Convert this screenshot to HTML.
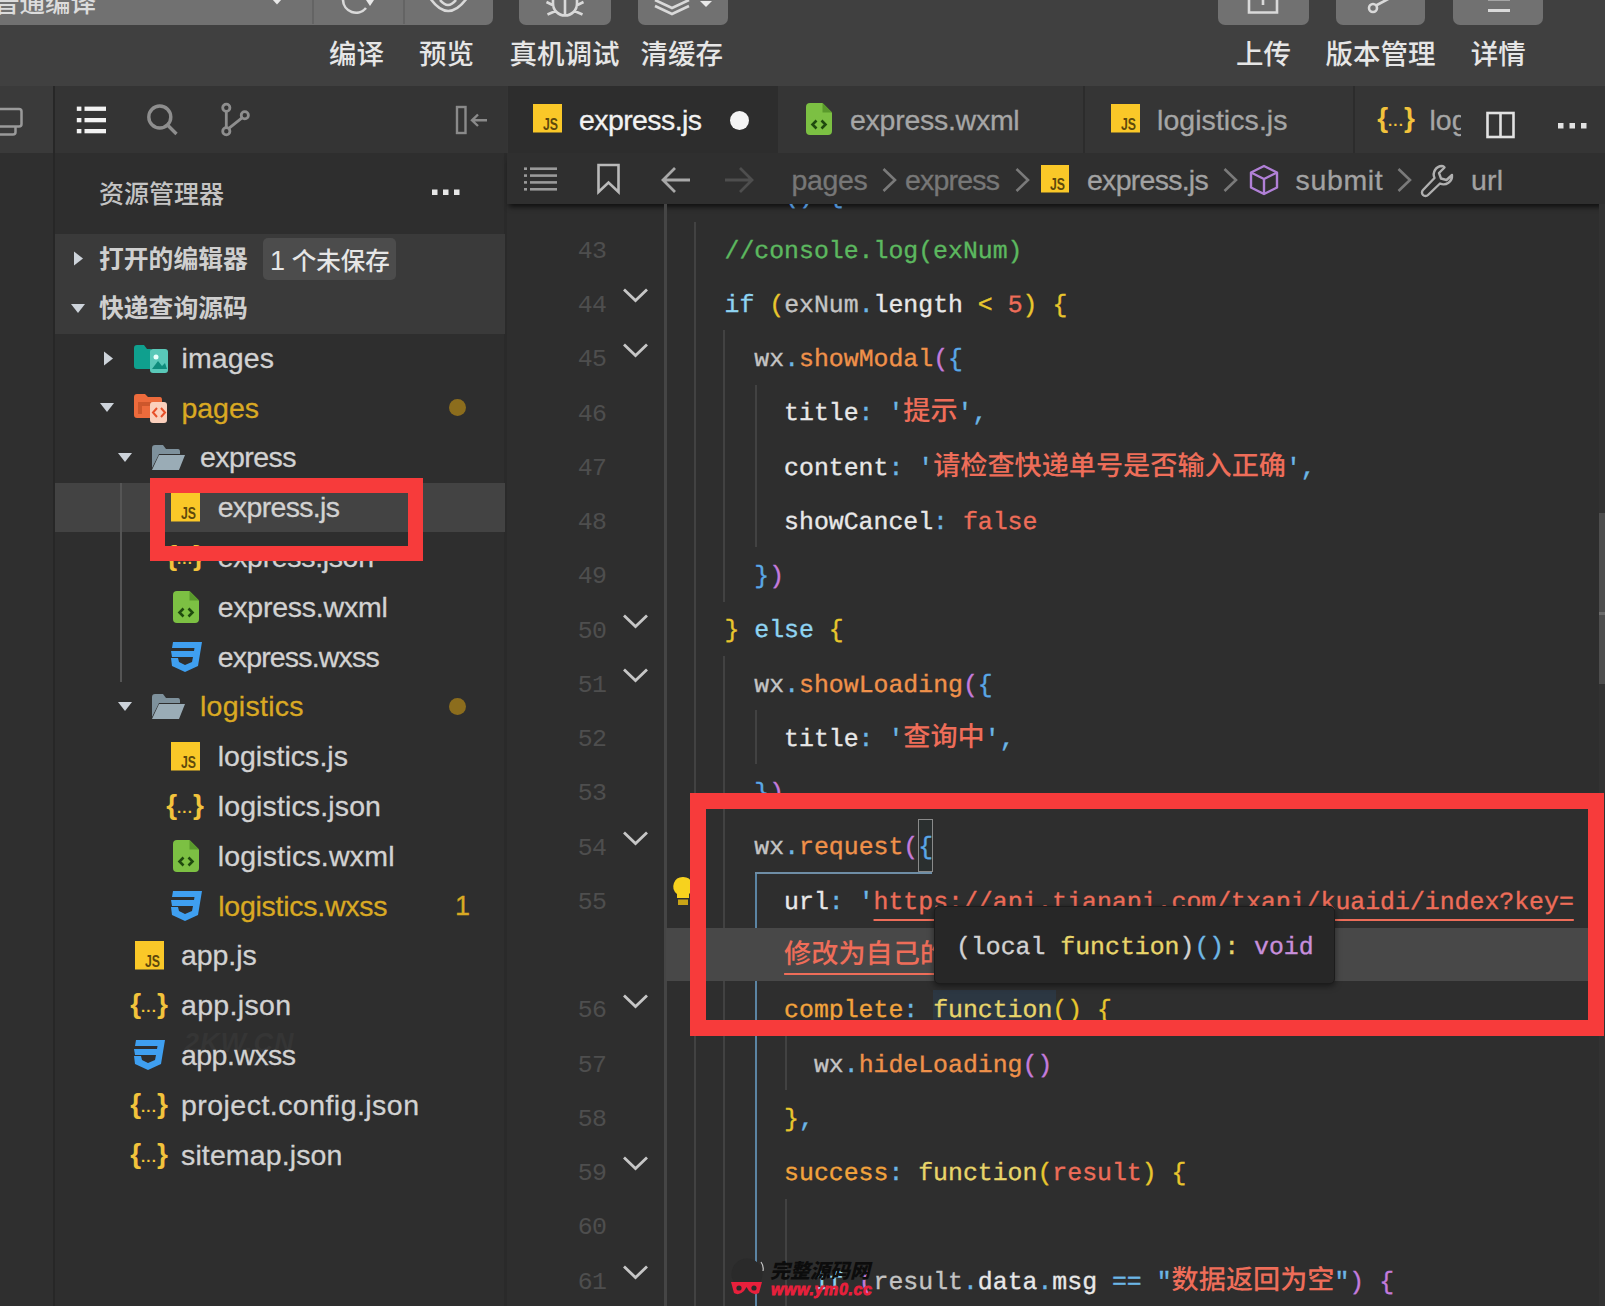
<!DOCTYPE html>
<html lang="zh-CN">
<head>
<meta charset="utf-8">
<title>express.js</title>
<style>
html,body{margin:0;padding:0}
body{width:1605px;height:1306px;overflow:hidden;position:relative;background:#2e2e2e;
  font-family:"Liberation Sans","Noto Sans CJK SC",sans-serif;color:#ccc}
.a{position:absolute}
svg{position:absolute;overflow:visible}
#tb{left:0;top:0;width:1605px;height:85.5px;background:#404040}
.btn{top:-10px;height:34.5px;background:#717171;border-radius:7px}
.lbl{top:34.5px;height:40px;line-height:40px;font-size:27.5px;color:#e6e6e6;white-space:nowrap;text-align:center;
  font-family:"Liberation Sans","Noto Sans CJK SC",sans-serif;font-weight:500}
#act{left:0;top:86px;width:52.5px;height:1220px;background:#2f2f2f;border-right:2.5px solid #272727}
#side{left:55px;top:86px;width:449px;height:1220px;background:#2e2e2e;border-right:3.5px solid #2a2a2a}
#sidehead{left:55px;top:86px;width:452px;height:67px;background:#343434}
#sec{left:55px;top:233.5px;width:450px;height:100.5px;background:#3a3a3a}
#selrow{left:55px;top:482.5px;width:450px;height:49.8px;background:#434343}
.t{height:49.8px;line-height:49.8px;font-size:28.5px;color:#d2d2d2;white-space:nowrap;-webkit-text-stroke:0.3px}
.t.y{color:#d9a923}
.c{font-family:"Liberation Sans","Noto Sans CJK SC",sans-serif;font-size:24.8px;font-weight:500;color:#cfcfcf;height:49.8px;line-height:49.8px;white-space:nowrap}
#tabs{left:507px;top:86px;width:1098px;height:67px;background:#353535}
#tab1{left:507.5px;top:86px;width:270px;height:67px;background:#2d2d2d}
.tt{top:86px;height:67px;line-height:68px;font-size:28.5px;white-space:nowrap;color:#a6a6a6;-webkit-text-stroke:0.3px}
#bc{left:507px;top:153px;width:1098px;height:50.5px;background:#2f2f2f;box-shadow:0 5px 5px -2px rgba(0,0,0,.65)}
.bt{top:155px;height:50px;line-height:50px;font-size:28.5px;white-space:nowrap;color:#777;-webkit-text-stroke:0.3px}
.ln{left:560px;width:46.5px;height:54.26px;line-height:54.26px;color:#4e4e4e;font-family:"Liberation Mono",monospace;font-size:24.83px;letter-spacing:-0.5px;text-align:right;white-space:nowrap}
.cl{left:724.5px;height:54.26px;line-height:54.26px;white-space:pre;font-family:"Liberation Mono","Noto Sans CJK SC",monospace;font-size:24.83px;color:#d4d4d4;text-rendering:geometricPrecision;-webkit-text-stroke:0.35px}
.z{font-size:27.15px;font-family:"Liberation Sans","Noto Sans CJK SC",sans-serif;line-height:0;font-weight:500;-webkit-text-stroke:0}
.g{width:2px;background:#404040}
.cm{color:#5cb85f}.kw{color:#8fd4f2}.py{color:#e8c62d}.pp{color:#c47bdc}.pb{color:#5aa7e6}
.fn{color:#f0914a}.st{color:#ee6d59}.q{color:#6cb6e6}.pr{color:#e8e8e8}.or{color:#f2a33c}.fy{color:#e8d56a}.gr{color:#c4c4c4}
.u{text-decoration:underline;text-decoration-thickness:2px;text-underline-offset:10px}
.red{border:16px solid #f73b3b;box-sizing:border-box}
</style>
</head>
<body>
<div id="tb" class="a"></div>
<div class="a btn" style="left:-10px;width:502.5px"></div>
<div class="a" style="left:312px;top:0;width:2px;height:24px;background:#646464"></div>
<div class="a" style="left:403px;top:0;width:2px;height:24px;background:#646464"></div>
<div class="a btn" style="left:519px;width:92px"></div>
<div class="a btn" style="left:638px;width:89.5px"></div>
<div class="a btn" style="left:1218px;width:91px"></div>
<div class="a btn" style="left:1336px;width:89px"></div>
<div class="a btn" style="left:1453px;width:90px"></div>
<div class="a lbl" style="left:-6px;top:-17px;font-size:25.5px;color:#dcdcdc">普通编译</div>
<svg style="left:0;top:2px" width="1605" height="30" viewBox="0 0 1605 30" fill="none" stroke="#d9d9d9" stroke-width="2.6">
 <path d="M272 -3 L277 2.5 L282 -3 Z" fill="#e8e8e8" stroke="none"/>
 <path d="M343 -2 A13 13 0 0 0 366 6"/>
 <path d="M366 -2 L374 -2 L370 4 Z" fill="#e8e8e8" stroke="none"/>
 <path d="M430 -4 Q448 22 467 -4" />
 <path d="M440 -2 Q448 8 456 -2" />
 <path d="M553 -2 L553 1.5 A12 12 0 0 0 577 1.5 L577 -2 M565 -2 L565 13.5 M553.5 3.5 L546.5 0 M576.5 3.5 L583.5 0 M555.5 9 L547.5 12.5 M574.5 9 L582.5 12.5"/>
 <path d="M655 -2 L672 6 L689 -2 M655 4 L672 12 L689 4"/>
 <path d="M700 -1 L706 5 L712 -1 Z" fill="#e8e8e8" stroke="none"/>
 <path d="M1249 -2 L1249 10.5 L1277 10.5 L1277 -2 M1263 -2 L1263 3"/>
 <circle cx="1373" cy="6" r="4"/><path d="M1376 3.5 L1392 -5"/>
 <path d="M1488 -3 L1510 -3 M1488 8.5 L1510 8.5" stroke-width="3"/>
</svg>
<div class="a lbl" style="left:326.5px;width:60px">编译</div>
<div class="a lbl" style="left:416.5px;width:60px">预览</div>
<div class="a lbl" style="left:504.6px;width:120px">真机调试</div>
<div class="a lbl" style="left:631.8px;width:100px">清缓存</div>
<div class="a lbl" style="left:1233.5px;width:60px">上传</div>
<div class="a lbl" style="left:1320.4px;width:120px">版本管理</div>
<div class="a lbl" style="left:1468.3px;width:60px">详情</div>
<div id="act" class="a"></div><div id="side" class="a"></div><div id="sidehead" class="a"></div><div id="sec" class="a"></div><div id="selrow" class="a"></div>
<div class="a" style="left:0;top:86px;width:53px;height:67px;background:#3a3a3a"></div>
<svg style="left:0px;top:100px" width="30" height="40" viewBox="0 0 30 40" ><path d="M-6 9 H19 Q21.5 9 21.5 11.5 V24 Q21.5 26.5 19 26.5 H-6 M15.5 27 V32 Q15.5 34.5 13 34.5 H-6" fill="none" stroke="#9a9a9a" stroke-width="2.5"/></svg>
<svg style="left:70px;top:100px" width="40" height="40" viewBox="0 0 40 40" ><g fill="#f2f2f2"><rect x="6.8" y="6.6" width="4.6" height="4.3"/><rect x="14.5" y="6.6" width="21.5" height="4.3"/><rect x="6.8" y="18" width="4.6" height="4.3"/><rect x="14.5" y="18" width="21.5" height="4.3"/><rect x="6.8" y="29" width="4.6" height="4.3"/><rect x="14.5" y="29" width="21.5" height="4.3"/></g></svg>
<svg style="left:140px;top:100px" width="40" height="40" viewBox="0 0 40 40" ><circle cx="19.8" cy="17" r="11" fill="none" stroke="#8e8e8e" stroke-width="3.4"/><path d="M28 25.5 L36.5 34" stroke="#8e8e8e" stroke-width="3.4"/></svg>
<svg style="left:215px;top:100px" width="40" height="40" viewBox="0 0 40 40" ><g fill="none" stroke="#8e8e8e" stroke-width="2.8"><circle cx="11.3" cy="7.7" r="3.6"/><circle cx="29.8" cy="15.2" r="3.6"/><circle cx="11.3" cy="31.2" r="3.6"/><path d="M11.3 11.3 V27.6 M27 17.8 L13.5 28.6"/></g></svg>
<svg style="left:450px;top:100px" width="40" height="40" viewBox="0 0 40 40" ><g fill="none" stroke="#8a8a8a" stroke-width="2.4"><rect x="7" y="7" width="8.5" height="26"/><path d="M22 20.3 H37 M28 14.5 L22 20.3 L28 26"/></g></svg>
<div class="a c" style="left:99px;top:170px;color:#c4c4c4;font-size:25px">资源管理器</div>
<svg style="left:428px;top:182px" width="36" height="20" viewBox="0 0 36 20" ><g fill="#e6e6e6"><rect x="4" y="7.5" width="5.5" height="5.5"/><rect x="15" y="7.5" width="5.5" height="5.5"/><rect x="26" y="7.5" width="5.5" height="5.5"/></g></svg>
<svg style="left:73.0px;top:250.89999999999998px" width="11" height="15" viewBox="0 0 11 15" ><path d="M1 0.5 L10 7.5 L1 14.5 Z" fill="#cdd3da"/></svg>
<div class="a c" style="left:99px;top:234.49999999999997px;font-weight:700">打开的编辑器</div>
<div class="a" style="left:263px;top:238px;width:133px;height:42px;background:#4c4c4c;border-radius:5px"></div>
<div class="a c" style="left:270px;top:236.49999999999997px;color:#e6e6e6;font-size:24.5px"><span style="font-family:Liberation Sans,sans-serif;font-size:27px">1</span> 个未保存</div>
<svg style="left:70.7px;top:304.3px" width="14" height="9" viewBox="0 0 14 9" ><path d="M0 0 H14 L7 9 Z" fill="#cdd3da"/></svg>
<div class="a c" style="left:99px;top:284.3px;font-weight:700">快递查询源码</div>
<div class="a" style="left:184px;top:1028px;font:italic bold 27px 'Liberation Sans',sans-serif;color:#353535;letter-spacing:1px">2KW.CN</div>
<svg style="left:102.5px;top:350.5px" width="11" height="15" viewBox="0 0 11 15" ><path d="M1 0.5 L10 7.5 L1 14.5 Z" fill="#cdd3da"/></svg>
<svg style="left:134px;top:344.5px" width="34" height="30" viewBox="0 0 34 30" ><path d="M0 3 Q0 0 3 0 H10 L13 4 H17 V24 H3 Q0 24 0 21 Z" fill="#0fa08e"/><rect x="16" y="4" width="18" height="24" rx="3" fill="#59c8b8"/><circle cx="22" cy="12" r="2.5" fill="#e9fffb"/><path d="M18 24 L24 16 L28 21 L31 18 L33 24 Z" fill="#0f8c7c"/></svg>
<div class="a t" id="t2" style="left:181.5px;top:333.8px;letter-spacing:0.125px">images</div>
<svg style="left:100px;top:403.29999999999995px" width="14" height="9" viewBox="0 0 14 9" ><path d="M0 0 H14 L7 9 Z" fill="#cdd3da"/></svg>
<svg style="left:134px;top:393.79999999999995px" width="34" height="30" viewBox="0 0 34 30" ><path d="M0 3 Q0 0 3 0 H11 L14 3 H26 Q28 3 28 6 V24 H3 Q0 24 0 21 Z" fill="#ed6b3c"/><path d="M4 8 H17 V12 H8 V20 H4 Z" fill="#b84a22" opacity=".6"/><rect x="16" y="8" width="17" height="21" rx="3" fill="#fbd0bd"/><path d="M23 14 L19 18.5 L23 23 M27 14 L31 18.5 L27 23" stroke="#e8502a" stroke-width="2" fill="none"/></svg>
<div class="a t y" id="t3" style="left:181.5px;top:383.6px;letter-spacing:-0.039px">pages</div>
<svg style="left:118.3px;top:453.09999999999997px" width="14" height="9" viewBox="0 0 14 9" ><path d="M0 0 H14 L7 9 Z" fill="#cdd3da"/></svg>
<svg style="left:152.4px;top:444.59999999999997px" width="33" height="25" viewBox="0 0 33 25" ><path d="M0 3 Q0 0 3 0 H11 L14 4 H26 Q28 4 28 7 V9 H7 L0 23 Z" fill="#7e919c"/><path d="M7 10 H33 L27 25 H0 Z" fill="#9aacb6"/></svg>
<div class="a t" id="t4" style="left:200px;top:433.4px;letter-spacing:-0.549px">express</div>
<svg style="left:171px;top:492.9px" width="29" height="29" viewBox="0 0 29 29" ><rect width="29" height="28.5" fill="#fac828"/><text x="10" y="25.5" textLength="15" lengthAdjust="spacingAndGlyphs" font-family="Liberation Sans, sans-serif" font-weight="700" font-size="16" fill="#5e480c">JS</text></svg>
<div class="a t" id="t5" style="left:217.7px;top:483.2px;letter-spacing:-0.666px">express.js</div>
<svg style="left:166px;top:539.1999999999999px" width="38" height="34" viewBox="0 0 38 34" ><text x="19" y="26" text-anchor="middle" font-family="Liberation Sans, sans-serif" font-weight="bold" font-size="28" fill="#f2c33c" letter-spacing="0">{<tspan font-size="15" dy="2.5" letter-spacing="0.3">···</tspan><tspan dy="-2.5">}</tspan></text></svg>
<div class="a t" id="t6" style="left:217.7px;top:533.0px;letter-spacing:-0.336px">express.json</div>
<svg style="left:173px;top:591.0px" width="26" height="32" viewBox="0 0 26 32" ><path d="M4 0 H16.5 L26 9.5 V28 Q26 32 22 32 H4 Q0 32 0 28 V4 Q0 0 4 0 Z" fill="#7cc043"/><path d="M16.5 0 L26 9.5 H16.5 Z" fill="#5a9a2c"/><path d="M10.5 17.5 L6.5 21.5 L10.5 25.5 M15.5 17.5 L19.5 21.5 L15.5 25.5" stroke="#1f4a0e" stroke-width="2.6" fill="none"/></svg>
<div class="a t" id="t7" style="left:217.7px;top:582.8px;letter-spacing:-0.230px">express.wxml</div>
<svg style="left:170px;top:641.8px" width="32" height="30" viewBox="0 0 32 30" ><path d="M3 0 H32 L28 24 L15 30 L2 24 L1 16 H8 L9 20 L15 23 L22 20 L23 15 H2 L1 9 H24 L24.5 6 H2 Z" fill="#3f9ff0"/></svg>
<div class="a t" id="t8" style="left:217.7px;top:632.6px;letter-spacing:-0.822px">express.wxss</div>
<svg style="left:118.3px;top:702.0999999999999px" width="14" height="9" viewBox="0 0 14 9" ><path d="M0 0 H14 L7 9 Z" fill="#cdd3da"/></svg>
<svg style="left:152.4px;top:693.5999999999999px" width="33" height="25" viewBox="0 0 33 25" ><path d="M0 3 Q0 0 3 0 H11 L14 4 H26 Q28 4 28 7 V9 H7 L0 23 Z" fill="#7e919c"/><path d="M7 10 H33 L27 25 H0 Z" fill="#9aacb6"/></svg>
<div class="a t y" id="t9" style="left:200px;top:682.4px;letter-spacing:0.266px">logistics</div>
<svg style="left:171px;top:741.9px" width="29" height="29" viewBox="0 0 29 29" ><rect width="29" height="28.5" fill="#fac828"/><text x="10" y="25.5" textLength="15" lengthAdjust="spacingAndGlyphs" font-family="Liberation Sans, sans-serif" font-weight="700" font-size="16" fill="#5e480c">JS</text></svg>
<div class="a t" id="t10" style="left:217.7px;top:732.2px;letter-spacing:0.039px">logistics.js</div>
<svg style="left:166px;top:788.1999999999999px" width="38" height="34" viewBox="0 0 38 34" ><text x="19" y="26" text-anchor="middle" font-family="Liberation Sans, sans-serif" font-weight="bold" font-size="28" fill="#f2c33c" letter-spacing="0">{<tspan font-size="15" dy="2.5" letter-spacing="0.3">···</tspan><tspan dy="-2.5">}</tspan></text></svg>
<div class="a t" id="t11" style="left:217.7px;top:782.0px;letter-spacing:0.132px">logistics.json</div>
<svg style="left:173px;top:839.9999999999999px" width="26" height="32" viewBox="0 0 26 32" ><path d="M4 0 H16.5 L26 9.5 V28 Q26 32 22 32 H4 Q0 32 0 28 V4 Q0 0 4 0 Z" fill="#7cc043"/><path d="M16.5 0 L26 9.5 H16.5 Z" fill="#5a9a2c"/><path d="M10.5 17.5 L6.5 21.5 L10.5 25.5 M15.5 17.5 L19.5 21.5 L15.5 25.5" stroke="#1f4a0e" stroke-width="2.6" fill="none"/></svg>
<div class="a t" id="t12" style="left:217.7px;top:831.8px;letter-spacing:0.201px">logistics.wxml</div>
<svg style="left:170px;top:890.8px" width="32" height="30" viewBox="0 0 32 30" ><path d="M3 0 H32 L28 24 L15 30 L2 24 L1 16 H8 L9 20 L15 23 L22 20 L23 15 H2 L1 9 H24 L24.5 6 H2 Z" fill="#3f9ff0"/></svg>
<div class="a t y" id="t13" style="left:218.3px;top:881.6px;letter-spacing:-0.263px">logistics.wxss</div>
<svg style="left:134.5px;top:941.0999999999999px" width="29" height="29" viewBox="0 0 29 29" ><rect width="29" height="28.5" fill="#fac828"/><text x="10" y="25.5" textLength="15" lengthAdjust="spacingAndGlyphs" font-family="Liberation Sans, sans-serif" font-weight="700" font-size="16" fill="#5e480c">JS</text></svg>
<div class="a t" id="t14" style="left:181px;top:931.4px;letter-spacing:-0.073px">app.js</div>
<svg style="left:129.5px;top:987.4px" width="38" height="34" viewBox="0 0 38 34" ><text x="19" y="26" text-anchor="middle" font-family="Liberation Sans, sans-serif" font-weight="bold" font-size="28" fill="#f2c33c" letter-spacing="0">{<tspan font-size="15" dy="2.5" letter-spacing="0.3">···</tspan><tspan dy="-2.5">}</tspan></text></svg>
<div class="a t" id="t15" style="left:181px;top:981.2px;letter-spacing:0.319px">app.json</div>
<svg style="left:133px;top:1040.1999999999998px" width="32" height="30" viewBox="0 0 32 30" ><path d="M3 0 H32 L28 24 L15 30 L2 24 L1 16 H8 L9 20 L15 23 L22 20 L23 15 H2 L1 9 H24 L24.5 6 H2 Z" fill="#3f9ff0"/></svg>
<div class="a t" id="t16" style="left:181px;top:1031.0px;letter-spacing:-0.545px">app.wxss</div>
<svg style="left:129.5px;top:1087.0px" width="38" height="34" viewBox="0 0 38 34" ><text x="19" y="26" text-anchor="middle" font-family="Liberation Sans, sans-serif" font-weight="bold" font-size="28" fill="#f2c33c" letter-spacing="0">{<tspan font-size="15" dy="2.5" letter-spacing="0.3">···</tspan><tspan dy="-2.5">}</tspan></text></svg>
<div class="a t" id="t17" style="left:181px;top:1080.8px;letter-spacing:0.460px">project.config.json</div>
<svg style="left:129.5px;top:1136.8px" width="38" height="34" viewBox="0 0 38 34" ><text x="19" y="26" text-anchor="middle" font-family="Liberation Sans, sans-serif" font-weight="bold" font-size="28" fill="#f2c33c" letter-spacing="0">{<tspan font-size="15" dy="2.5" letter-spacing="0.3">···</tspan><tspan dy="-2.5">}</tspan></text></svg>
<div class="a t" id="t18" style="left:181px;top:1130.6px;letter-spacing:0.127px">sitemap.json</div>
<div class="a" style="left:120px;top:483px;width:2px;height:199px;background:#555"></div>
<div class="a" style="left:449px;top:398.5px;width:17px;height:17px;border-radius:50%;background:#8c6d1d"></div>
<div class="a" style="left:449px;top:697.5px;width:17px;height:17px;border-radius:50%;background:#8c6d1d"></div>
<div class="a t y" style="left:455px;top:881.6px;font-size:27px">1</div>
<div id="tabs" class="a"></div><div id="tab1" class="a"></div>
<div class="a" style="left:1082.5px;top:86px;width:2px;height:67px;background:#2c2c2c"></div>
<div class="a" style="left:1353px;top:86px;width:2px;height:67px;background:#2c2c2c"></div>
<svg style="left:533px;top:103.5px" width="29" height="29" viewBox="0 0 29 29" ><rect width="29" height="28.5" fill="#fac828"/><text x="10" y="25.5" textLength="15" lengthAdjust="spacingAndGlyphs" font-family="Liberation Sans, sans-serif" font-weight="700" font-size="16" fill="#5e480c">JS</text></svg>
<div class="a tt" id="tt1" style="left:579px;color:#f2f2f2;letter-spacing:-0.589px">express.js</div>
<div class="a" style="left:729.5px;top:110.8px;width:19px;height:19px;border-radius:50%;background:#f4f4f4"></div>
<svg style="left:806px;top:103px" width="26" height="32" viewBox="0 0 26 32" ><path d="M4 0 H16.5 L26 9.5 V28 Q26 32 22 32 H4 Q0 32 0 28 V4 Q0 0 4 0 Z" fill="#7cc043"/><path d="M16.5 0 L26 9.5 H16.5 Z" fill="#5a9a2c"/><path d="M10.5 17.5 L6.5 21.5 L10.5 25.5 M15.5 17.5 L19.5 21.5 L15.5 25.5" stroke="#1f4a0e" stroke-width="2.6" fill="none"/></svg>
<div class="a tt" id="tt2" style="left:850px;letter-spacing:-0.266px">express.wxml</div>
<svg style="left:1111px;top:104px" width="29" height="29" viewBox="0 0 29 29" ><rect width="29" height="28.5" fill="#fac828"/><text x="10" y="25.5" textLength="15" lengthAdjust="spacingAndGlyphs" font-family="Liberation Sans, sans-serif" font-weight="700" font-size="16" fill="#5e480c">JS</text></svg>
<div class="a tt" id="tt3" style="left:1157px;letter-spacing:0.057px">logistics.js</div>
<svg style="left:1377px;top:101px" width="38" height="34" viewBox="0 0 38 34" ><text x="19" y="26" text-anchor="middle" font-family="Liberation Sans, sans-serif" font-weight="bold" font-size="28" fill="#f2c33c" letter-spacing="0">{<tspan font-size="15" dy="2.5" letter-spacing="0.3">···</tspan><tspan dy="-2.5">}</tspan></text></svg>
<div class="a tt" id="tt4" style="left:1429.4px;width:31.5px;overflow:hidden;letter-spacing:0.109px">logistics.json</div>
<svg style="left:1480px;top:100px" width="40" height="40" viewBox="0 0 40 40" ><g fill="none" stroke="#e2e2e2" stroke-width="2.6"><rect x="7.5" y="13" width="26" height="24"/><path d="M20.5 13 V37"/></g></svg>
<svg style="left:1553px;top:110px" width="40" height="20" viewBox="0 0 40 20" ><g fill="#e2e2e2"><rect x="5" y="13" width="5.5" height="5.5"/><rect x="16.5" y="13" width="5.5" height="5.5"/><rect x="28" y="13" width="5.5" height="5.5"/></g></svg>
<div id="bc" class="a"></div>
<svg style="left:520px;top:160px" width="40" height="40" viewBox="0 0 40 40" ><g fill="#9a9a9a"><rect x="4" y="7.4" width="3" height="2.6"/><rect x="10" y="7.4" width="27" height="2.6"/><rect x="4" y="14.3" width="3" height="2.6"/><rect x="10" y="14.3" width="27" height="2.6"/><rect x="4" y="21.1" width="3" height="2.6"/><rect x="10" y="21.1" width="27" height="2.6"/><rect x="4" y="28" width="3" height="2.6"/><rect x="10" y="28" width="27" height="2.6"/></g></svg>
<svg style="left:590px;top:160px" width="40" height="40" viewBox="0 0 40 40" ><path d="M8.5 5 H28.5 V32 L18.5 22.5 L8.5 32 Z" fill="none" stroke="#b9b9b9" stroke-width="2.6"/></svg>
<svg style="left:655px;top:160px" width="40" height="40" viewBox="0 0 40 40" ><path d="M8 20 H35 M20 8 L8 20 L20 32" fill="none" stroke="#a8a8a8" stroke-width="2.8"/></svg>
<svg style="left:720px;top:160px" width="40" height="40" viewBox="0 0 40 40" ><path d="M5 20 H32 M20 8 L32 20 L20 32" fill="none" stroke="#4e4e4e" stroke-width="2.8"/></svg>
<div class="a bt" id="b1" style="left:791.4px;letter-spacing:-0.314px">pages</div>
<svg style="left:882px;top:166px" width="16" height="28" viewBox="0 0 16 28" ><path d="M1.5 3 L13 14 L1.5 25" fill="none" stroke="#7a7a7a" stroke-width="2.6"/></svg>
<div class="a bt" id="b2" style="left:905px;letter-spacing:-0.799px">express</div>
<svg style="left:1015px;top:166px" width="16" height="28" viewBox="0 0 16 28" ><path d="M1.5 3 L13 14 L1.5 25" fill="none" stroke="#7a7a7a" stroke-width="2.6"/></svg>
<svg style="left:1041px;top:165px" width="28" height="28" viewBox="0 0 28 28" ><rect width="28" height="27.5" fill="#fac828"/><text x="9" y="24.5" textLength="15" lengthAdjust="spacingAndGlyphs" font-family="Liberation Sans, sans-serif" font-weight="700" font-size="16" fill="#5e480c">JS</text></svg>
<div class="a bt" id="b3" style="left:1087px;letter-spacing:-0.733px;color:#a2a2a2">express.js</div>
<svg style="left:1223px;top:166px" width="16" height="28" viewBox="0 0 16 28" ><path d="M1.5 3 L13 14 L1.5 25" fill="none" stroke="#7a7a7a" stroke-width="2.6"/></svg>
<svg style="left:1247px;top:163px" width="34" height="34" viewBox="0 0 34 34" ><g fill="none" stroke="#b180d7" stroke-width="2.4" stroke-linejoin="round"><path d="M17 3 L30 9.5 V24.5 L17 31 L4 24.5 V9.5 Z"/><path d="M4 9.5 L17 16 L30 9.5 M17 16 V31"/></g></svg>
<div class="a bt" id="b4" style="left:1295.5px;letter-spacing:0.649px;color:#a2a2a2">submit</div>
<svg style="left:1397px;top:166px" width="16" height="28" viewBox="0 0 16 28" ><path d="M1.5 3 L13 14 L1.5 25" fill="none" stroke="#7a7a7a" stroke-width="2.6"/></svg>
<svg style="left:1420px;top:163px" width="36" height="34" viewBox="0 0 36 34" ><path d="M22 3 A8.5 8.5 0 0 0 14.5 15 L3 27 A3.2 3.2 0 0 0 8 32 L20 20.5 A8.5 8.5 0 0 0 32 12 L26.5 17 L21 15.5 L19 10 L24.5 4.5 Q23.5 3 22 3 Z" fill="none" stroke="#b0b0b0" stroke-width="2.4" stroke-linejoin="round"/></svg>
<div class="a bt" id="b5" style="left:1471px;letter-spacing:0.156px;color:#a2a2a2">url</div>
<div class="a" style="left:664px;top:204px;width:2.5px;height:1102px;background:#454545"></div>
<div class="a" style="left:693.7px;top:221.87px;width:2px;height:1084.13px;background:#424242"></div>
<div class="a" style="left:723px;top:330.39px;width:2px;height:271.29999999999995px;background:#424242"></div>
<div class="a" style="left:723px;top:655.9499999999999px;width:2px;height:650.0500000000001px;background:#424242"></div>
<div class="a" style="left:755px;top:384.65px;width:2px;height:162.77999999999997px;background:#424242"></div>
<div class="a" style="left:755px;top:710.2099999999999px;width:2px;height:54.260000000000105px;background:#424242"></div>
<div class="a" style="left:755px;top:872.99px;width:2px;height:433.01px;background:#5b84a3"></div>
<div class="a" style="left:785px;top:1035.77px;width:2px;height:54.25999999999976px;background:#424242"></div>
<div class="a" style="left:785px;top:1198.5499999999997px;width:2px;height:107.45000000000027px;background:#424242"></div>
<div class="a" style="left:700px;top:204px;width:300px;height:8px;overflow:hidden"><div class="a cl" style="left:24.5px;top:-33.7px;color:#4f8fd0">    () {</div></div>
<div class="a" style="left:666px;top:927.6px;width:933px;height:53.8px;background:#484848"></div>
<div class="a" style="left:933px;top:989.5px;width:123px;height:38px;background:#2c3742"></div>
<div class="a" style="left:917.5px;top:819.2px;width:15.5px;height:52.5px;border:1.5px solid #8a8a8a;box-sizing:border-box;background:#2a2f2f"></div>
<div class="a" style="left:755px;top:871.5px;width:177px;height:2px;background:#6f8ea6"></div>
<div class="a ln" style="top:223.8px">43</div>
<div class="a cl" style="top:224.6px"><span class="cm">//console.log(exNum)</span></div>
<div class="a ln" style="top:278.0px">44</div>
<div class="a cl" style="top:278.8px"><span class="kw">if</span> <span class="py">(</span><span class="gr">exNum</span><span class="q">.</span><span class="pr">length</span> <span class="py">&lt;</span> <span class="st">5</span><span class="py">)</span> <span class="py">{</span></div>
<div class="a ln" style="top:332.3px">45</div>
<div class="a cl" style="top:333.1px">  <span class="gr">wx</span><span class="q">.</span><span class="fn">showModal</span><span class="pp">(</span><span class="pb">{</span></div>
<div class="a ln" style="top:386.5px">46</div>
<div class="a cl" style="top:387.3px">    <span class="pr">title</span><span class="q">:</span> <span class="q">'</span><span class="st z">提示</span><span class="q">',</span></div>
<div class="a ln" style="top:440.8px">47</div>
<div class="a cl" style="top:441.6px">    <span class="pr">content</span><span class="q">:</span> <span class="q">'</span><span class="st z">请检查快递单号是否输入正确</span><span class="q">',</span></div>
<div class="a ln" style="top:495.1px">48</div>
<div class="a cl" style="top:495.9px">    <span class="pr">showCancel</span><span class="q">:</span> <span class="st">false</span></div>
<div class="a ln" style="top:549.3px">49</div>
<div class="a cl" style="top:550.1px">  <span class="pb">}</span><span class="pp">)</span></div>
<div class="a ln" style="top:603.6px">50</div>
<div class="a cl" style="top:604.4px"><span class="py">}</span> <span class="kw">else</span> <span class="py">{</span></div>
<div class="a ln" style="top:657.8px">51</div>
<div class="a cl" style="top:658.6px">  <span class="gr">wx</span><span class="q">.</span><span class="fn">showLoading</span><span class="pp">(</span><span class="pb">{</span></div>
<div class="a ln" style="top:712.1px">52</div>
<div class="a cl" style="top:712.9px">    <span class="pr">title</span><span class="q">:</span> <span class="q">'</span><span class="st z">查询中</span><span class="q">',</span></div>
<div class="a ln" style="top:766.4px">53</div>
<div class="a cl" style="top:767.2px">  <span class="pb">}</span><span class="pp">)</span></div>
<div class="a ln" style="top:820.6px">54</div>
<div class="a cl" style="top:821.4px">  <span class="gr">wx</span><span class="q">.</span><span class="fn">request</span><span class="pp">(</span><span class="pb">{</span></div>
<div class="a ln" style="top:874.9px">55</div>
<div class="a cl" style="top:875.7px">    <span class="pr">url</span><span class="q">:</span> <span class="q">'</span><span class="st u">https://api.tianapi.com/txapi/kuaidi/index?key=</span></div>
<div class="a cl" style="top:930.0px">    <span class="st u"><span class="z">修改为自己的</span>key</span><span class="q">',</span></div>
<div class="a ln" style="top:983.4px">56</div>
<div class="a cl" style="top:984.2px">    <span class="or">complete</span><span class="q">:</span> <span class="fy">function</span><span class="py">()</span> <span class="py">{</span></div>
<div class="a ln" style="top:1037.7px">57</div>
<div class="a cl" style="top:1038.5px">      <span class="gr">wx</span><span class="q">.</span><span class="fn">hideLoading</span><span class="pp">()</span></div>
<div class="a ln" style="top:1091.9px">58</div>
<div class="a cl" style="top:1092.7px">    <span class="py">}</span><span class="q">,</span></div>
<div class="a ln" style="top:1146.2px">59</div>
<div class="a cl" style="top:1147.0px">    <span class="or">success</span><span class="q">:</span> <span class="fy">function</span><span class="py">(</span><span class="st">result</span><span class="py">)</span> <span class="py">{</span></div>
<div class="a ln" style="top:1200.4px">60</div>
<div class="a ln" style="top:1254.7px">61</div>
<div class="a cl" style="top:1255.5px">      <span class="kw">if</span> <span class="pp">(</span><span class="gr">result</span><span class="q">.</span><span class="pr">data</span><span class="q">.</span><span class="pr">msg</span> <span class="q">==</span> <span class="q">"</span><span class="st z">数据返回为空</span><span class="q">"</span><span class="pp">)</span> <span class="pp">{</span></div>
<svg style="left:621px;top:286.26px" width="30" height="20" viewBox="0 0 30 20" ><path d="M3 3.5 L14.5 14.5 L26 3.5" fill="none" stroke="#c6c6c6" stroke-width="2.8"/></svg>
<svg style="left:621px;top:340.52px" width="30" height="20" viewBox="0 0 30 20" ><path d="M3 3.5 L14.5 14.5 L26 3.5" fill="none" stroke="#c6c6c6" stroke-width="2.8"/></svg>
<svg style="left:621px;top:611.8199999999999px" width="30" height="20" viewBox="0 0 30 20" ><path d="M3 3.5 L14.5 14.5 L26 3.5" fill="none" stroke="#c6c6c6" stroke-width="2.8"/></svg>
<svg style="left:621px;top:666.0799999999999px" width="30" height="20" viewBox="0 0 30 20" ><path d="M3 3.5 L14.5 14.5 L26 3.5" fill="none" stroke="#c6c6c6" stroke-width="2.8"/></svg>
<svg style="left:621px;top:828.86px" width="30" height="20" viewBox="0 0 30 20" ><path d="M3 3.5 L14.5 14.5 L26 3.5" fill="none" stroke="#c6c6c6" stroke-width="2.8"/></svg>
<svg style="left:621px;top:991.64px" width="30" height="20" viewBox="0 0 30 20" ><path d="M3 3.5 L14.5 14.5 L26 3.5" fill="none" stroke="#c6c6c6" stroke-width="2.8"/></svg>
<svg style="left:621px;top:1154.42px" width="30" height="20" viewBox="0 0 30 20" ><path d="M3 3.5 L14.5 14.5 L26 3.5" fill="none" stroke="#c6c6c6" stroke-width="2.8"/></svg>
<svg style="left:621px;top:1262.94px" width="30" height="20" viewBox="0 0 30 20" ><path d="M3 3.5 L14.5 14.5 L26 3.5" fill="none" stroke="#c6c6c6" stroke-width="2.8"/></svg>
<svg style="left:671.5px;top:876px" width="22" height="32" viewBox="0 0 22 32" ><path d="M11 1 A9.5 9.5 0 0 1 17 18 V22 H5 V18 A9.5 9.5 0 0 1 11 1 Z" fill="#f7d21e"/><rect x="6" y="23.5" width="10" height="5.5" fill="#c9a417"/></svg>
<div class="a" style="left:1599px;top:204px;width:6px;height:1102px;background:#323232"></div>
<div class="a" style="left:1599px;top:513px;width:6px;height:171px;background:#4d4d4d"></div>
<div class="a" style="left:1599px;top:612px;width:6px;height:3px;background:#6a6a6a"></div>
<div class="a" style="left:934px;top:906px;width:401px;height:78px;box-sizing:border-box;background:#272727;border:1.5px solid #1c1c1c;border-radius:5px;box-shadow:0 2px 6px rgba(0,0,0,.5)"></div>
<div class="a cl" style="left:956px;top:921.4px;color:#d2d2d2">(local <span class="fy">function</span>)<span style="color:#6fb8e6">()</span><span class="fy">:</span> <span style="color:#c88fdc">void</span></div>
<div class="a red" style="left:150px;top:478px;width:273px;height:82.5px;border-width:15px"></div>
<div class="a red" style="left:690px;top:793px;width:914px;height:243px"></div>
<svg style="left:728px;top:1256px" width="40" height="42" viewBox="0 0 40 42" ><circle cx="19" cy="18" r="15.5" fill="#2a2a2a"/><path d="M33 6 Q36 10 35 15" stroke="#c8c8c8" stroke-width="1.2" fill="none"/><path d="M3 26 H34 L31 37 Q26 40 21 35 L18.5 31 L16 35 Q11 40 6 37 Z" fill="#e8203c"/><circle cx="11" cy="32" r="2.6" fill="#2a2a2a"/><circle cx="26" cy="32" r="2.6" fill="#2a2a2a"/></svg>
<div class="a" style="left:770px;top:1258px;height:26px;line-height:26px;font:italic 900 20px/26px 'Liberation Sans','Noto Sans CJK SC',sans-serif;color:#0c0c0c;white-space:nowrap;letter-spacing:0px">完整源码网</div>
<div class="a" style="left:771px;top:1280px;height:20px;font:italic bold 16px/20px 'Liberation Sans',sans-serif;color:#e8203c;white-space:nowrap;letter-spacing:0.6px;-webkit-text-stroke:0.8px #e8203c">www.ym0.cc</div>
</body>
</html>
